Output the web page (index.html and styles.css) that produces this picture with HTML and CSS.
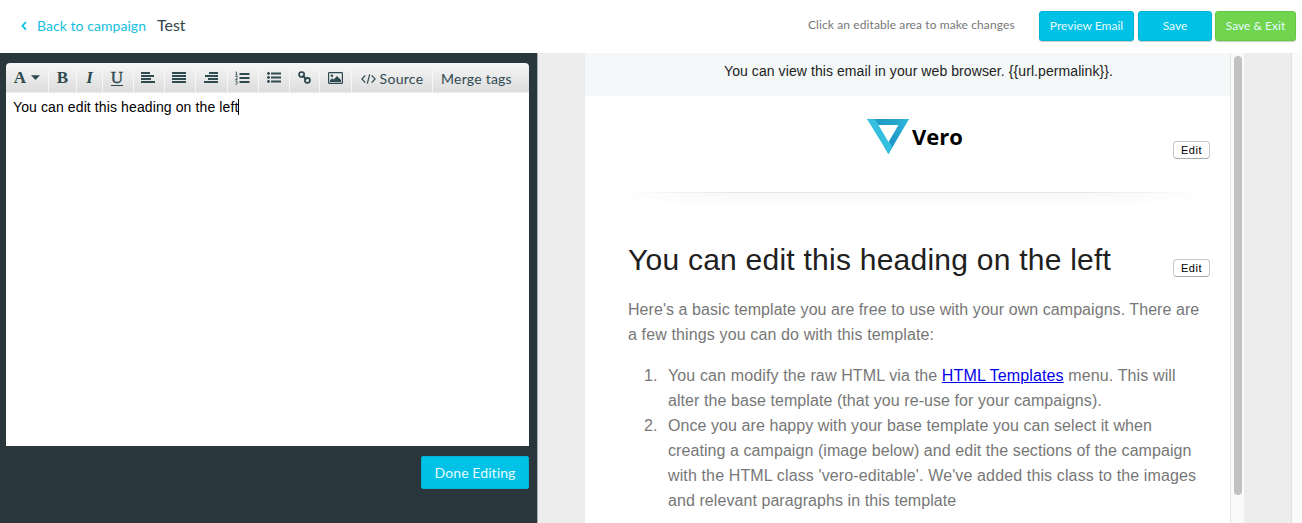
FILE: index.html
```html
<!DOCTYPE html>
<html lang="en">
<head>
<meta charset="utf-8">
<title>Edit campaign - Test</title>
<link rel="stylesheet" href="styles.css">
</head>
<body>
<header class="topbar">
  <a class="back"><svg class="chevron" width="6" height="10" viewBox="0 0 6 10"><path d="M5 1 1.400 4.800 5 8.600" fill="none" stroke="#00c2e6" stroke-width="1.700"/></svg><span class="back-label">Back to campaign</span></a>
  <h1 class="title">Test</h1>
  <span class="hint">Click an editable area to make changes</span>
  <div class="actions">
    <button class="btn preview"><span>Preview Email</span></button>
    <button class="btn save"><span>Save</span></button>
    <button class="btn exit"><span>Save &amp; Exit</span></button>
  </div>
</header>
<main class="workspace">
  <section class="editor">
    <div class="toolbar">
      <div class="tool w-font"><b class="glyph">A</b><svg width="9" height="5" viewBox="0 0 9 5"><path d="M0 .3h9L4.5 5z"/></svg></div>
      <div class="tool w-bold"><b class="glyph">B</b></div>
      <div class="tool w-italic"><b class="glyph italic">I</b></div>
      <div class="tool w31 nudge"><span class="glyph underline">U</span></div>
      <div class="tool w31 nudge"><svg width="14" height="11" viewBox="0 0 14 11"><path d="M0 0h9v2H0zM0 3h13v2H0zM0 6h10v2H0zM0 9h14v2H0z"/></svg></div>
      <div class="tool w31 nudge"><svg width="14" height="11" viewBox="0 0 14 11"><path d="M0 0h14v2H0zM0 3h14v2H0zM0 6h14v2H0zM0 9h14v2H0z"/></svg></div>
      <div class="tool w32 nudge"><svg width="14" height="11" viewBox="0 0 14 11"><path d="M5 0h9v2H5zM1 3h13v2H1zM4 6h10v2H4zM0 9h14v2H0z"/></svg></div>
      <div class="tool w31 nudge"><svg width="15" height="14" viewBox="0 0 15 14"><path d="M4.500 2H14.500v2h-10zM4.500 6H14.500v2h-10zM4.500 10H14.500v2h-10z"/><path d="M.5 1h1v3M.3 4h2.400M.4 5.500h1.800v1.400L.6 8.500h2M.3 10h2L1.300 11.300q1.200.2 1 1.200T.3 13.200" fill="none" stroke="#2f4a50" stroke-width=".8"/></svg></div>
      <div class="tool w31"><svg width="14" height="11" viewBox="0 0 14 11"><path d="M4 .5h10v2H4zM4 4.500h10v2H4zM4 8.500h10v2H4z"/><circle cx="1.500" cy="1.500" r="1.400"/><circle cx="1.500" cy="5.500" r="1.400"/><circle cx="1.500" cy="9.500" r="1.400"/></svg></div>
      <div class="tool w30"><svg width="13" height="13" viewBox="0 0 13 13"><g fill="none" stroke="#2f4a50" stroke-width="1.800"><rect x="1.100" y="1.100" width="5" height="4.800" rx="2.200"/><rect x="6.900" y="7" width="5" height="4.800" rx="2.200"/><path d="m4.500 4.500 4 4"/></g></svg></div>
      <div class="tool w32"><svg width="15" height="12" viewBox="0 0 15 12"><rect x=".6" y=".6" width="13.800" height="10.800" rx=".6" fill="none" stroke="#2f4a50" stroke-width="1.200"/><circle cx="3.900" cy="3.800" r="1.300"/><path d="M2 10V8.300l2.200-2.100 1.500 1.400L9 4l4 4v2z"/></svg></div>
      <div class="tool w-source"><svg width="15" height="10" viewBox="0 0 15 10"><path d="M4.300 1.300.9 5l3.400 3.700M10.700 1.300 14.100 5l-3.400 3.700M8.700.3 6.300 9.700" fill="none" stroke="#2f4a50" stroke-width="1.200"/></svg><span class="source-label">Source</span></div>
      <div class="tool w-merge"><span class="merge-label">Merge tags</span></div>
    </div>
    <div class="textarea">You can edit this heading on the left<i class="caret"></i></div>
    <button class="btn done"><span>Done Editing</span></button>
  </section>
  <section class="preview-pane">
    <article class="email">
      <p class="permalink">You can view this email in your web browser. {{url.permalink}}.</p>
      <div class="brand">
        <svg width="42" height="35" viewBox="0 0 42 35"><defs><linearGradient id="right" x1="1" y1="0" x2="0" y2="1"><stop offset="0" stop-color="#30b9df"/><stop offset="1" stop-color="#1787bb"/></linearGradient><linearGradient id="top"><stop offset="0" stop-color="#1c94c1"/><stop offset="1" stop-color="#2dafd1"/></linearGradient></defs><path d="M0 0h42L38 6H6z" fill="url(#top)"/><path d="M42 0 21.500 35l-4-6.500L34 0z" fill="url(#right)"/><path d="M0 0h8l17.500 28-4 7z" fill="#35bfdf"/><path d="M11.500 6h20L21.500 23z" fill="#fff"/></svg>
        <span class="brand-name">Vero</span>
        <button class="edit edit-brand">Edit</button>
      </div>
      <div class="divider"></div>
      <div class="heading-row"><h2>You can edit this heading on the left</h2><button class="edit">Edit</button></div>
      <p class="intro">Here's a basic template you are free to use with your own campaigns. There are<br><span class="loose">a few things you can do with this template:</span></p>
      <ol class="steps">
        <li><span class="loose">You can modify the raw HTML via the <a href="#">HTML Templates</a> menu. This will</span><br>alter the base template (that you re-use for your campaigns).</li>
        <li>Once you are happy with your base template you can select it when<br>creating a campaign (image below) and edit the sections of the campaign<br><span class="loose">with the HTML class 'vero-editable'. We've added this class to the images</span><br>and relevant paragraphs in this template</li>
      </ol>
    </article>
    <div class="scroll-track"><div class="thumb"></div></div>
    <div class="gutter"></div>
  </section>
</main>
</body>
</html>
```
FILE: styles.css
```css
* { box-sizing: border-box; }
body { margin: 0; width: 1302px; height: 523px; overflow: hidden; background: #fff; font-family: "Liberation Sans", Arial, sans-serif; }
button { font: inherit; padding: 0; }
.topbar { height: 53px; display: flex; align-items: flex-start; padding-left: 21px; font-family: Lato, sans-serif; white-space: nowrap; }
.back { display: flex; align-items: center; width: 136px; color: #14c0dd; font-size: 14px; line-height: 20px; letter-spacing: .05px; margin-top: 15px; }
.chevron { margin-right: 10px; }
.back-label { padding-top: 1px; }
.title { width: 651px; margin: 15px 0 0; font-size: 16px; line-height: 20px; font-weight: 400; color: #34464b; }
.hint { width: 231px; margin-top: 16px; font-size: 12px; line-height: 18px; letter-spacing: .1px; color: #777; }
.actions { display: flex; margin-top: 11px; }
.btn { display: block; height: 30px; border: 1px solid #00b3d6; border-radius: 3px; background: #00c2e6; color: #e6fbff; font-family: Lato, sans-serif; font-size: 12px; line-height: 28px; text-align: center; white-space: nowrap; box-shadow: 0 1px 1px rgba(0,0,0,.2); }
.preview { width: 95px; margin-right: 4px; }
.save { width: 74px; margin-right: 3px; }
.exit { width: 81px; background: #70d44e; border-color: #64ca42; }
.workspace { display: flex; height: 470px; }
.editor { width: 538px; padding: 10px 8px 0 6px; background: #29373c; border-right: 1px solid #a3afb5; }
.toolbar { display: flex; height: 30px; background: linear-gradient(#f7f7f7, #dcdcdc); border-bottom: 1px solid #ececec; border-radius: 4px 4px 0 0; }
.tool { display: flex; align-items: center; justify-content: center; border-right: 1px solid #f5f5f5; color: #2f4a50; fill: #2f4a50; font-family: Lato, sans-serif; font-size: 14px; white-space: nowrap; }
.nudge { padding-right: 2px; }
.w-font { width: 43px; gap: 5px; }
.w-bold { width: 28px; }
.w-italic { width: 26px; }
.w30 { width: 30px; }
.w31 { width: 31px; }
.w32 { width: 32px; }
.w-source { width: 81px; gap: 4px; padding-top: 2px; }
.source-label { letter-spacing: .3px; }
.w-merge { width: 96px; border: 0; justify-content: flex-start; padding: 2px 0 0 8px; letter-spacing: .23px; }
.glyph { font-family: "Liberation Serif", serif; font-size: 17px; line-height: 18px; }
.italic { font-style: italic; }
.underline { text-decoration: underline; text-underline-offset: 2px; -webkit-text-stroke: .4px; }
.textarea { height: 353px; padding: 6px 7px; background: #fff; color: #000; font-size: 14px; line-height: 17px; letter-spacing: .11px; white-space: nowrap; }
.caret { display: inline-block; width: 1px; height: 16px; background: #000; vertical-align: top; }
.done { width: 108px; height: 33px; margin: 10px 0 0 auto; border-radius: 2px; font-size: 14px; line-height: 30px; letter-spacing: .1px; box-shadow: none; }
.preview-pane { display: flex; width: 764px; background: #ededed; padding-left: 47px; }
.email { width: 645px; background: #fff; white-space: nowrap; }
.permalink { height: 43px; margin: 0; padding: 10px 0 0 139px; background: #f4f8f9; color: #222; font-size: 14px; line-height: 17px; letter-spacing: .08px; }
.brand { display: flex; height: 96px; padding: 23px 20px 0 282px; }
.brand-name { width: 261px; margin: 2px 0 0 3px; font: 700 22px/30px "Open Sans", sans-serif; color: #000; }
.edit { flex: none; width: 37px; height: 18px; border: 1px solid #c6c6c6; border-bottom-color: #a9a9a9; border-radius: 4px; background: #fff; color: #000; font-size: 11px; line-height: 16px; letter-spacing: .5px; text-align: center; }
.edit-brand { margin-top: 22px; }
.divider { height: 16px; margin: 0 25px 0 30px; background: linear-gradient(#e5e5e5 1px, #f7f7f7 1px, #fff); -webkit-mask-image: linear-gradient(90deg, transparent, #000 22%, #000 78%, transparent); }
.heading-row { display: flex; justify-content: space-between; padding: 31px 20px 0 43px; }
.heading-row .edit { margin-top: 20px; }
h2 { margin: 0; font-size: 30px; line-height: 42px; font-weight: 400; letter-spacing: .24px; color: #202020; }
.intro { margin: 16px 0 0 43px; font-size: 16px; line-height: 25px; letter-spacing: .06px; color: #777; }
.steps { margin: 16px 0 0 43px; padding: 0; list-style: none; counter-reset: step; font-size: 16px; line-height: 25px; letter-spacing: .07px; color: #777; }
.steps li { display: flow-root; padding-left: 40px; text-indent: -24px; counter-increment: step; }
.steps li::before { content: counter(step) "."; display: inline-block; width: 24px; text-indent: 0; }
.loose { letter-spacing: .13px; }
.steps a { color: #00e; }
.scroll-track { width: 14px; background: #fafafa; border-left: 1px solid #e5e5e5; padding: 3px 2px 0 3px; }
.thumb { width: 8px; height: 439px; border-radius: 4px; background: #c1c1c1; }
.gutter { width: 58px; margin-left: auto; background: linear-gradient(90deg, #ededed 47px, #e2e2e2 47px, #e2e2e2 48px, #fafafa 48px); }
```
